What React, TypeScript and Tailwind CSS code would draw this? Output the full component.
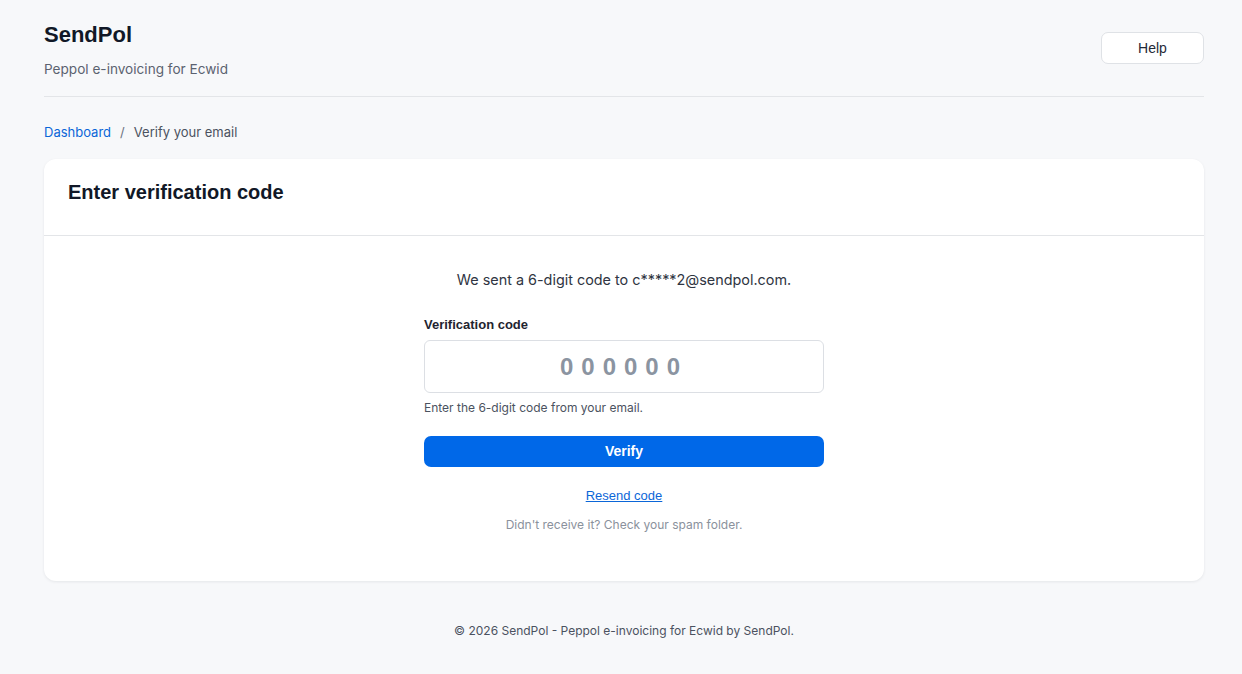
import React from 'react';

const sans = "font-['Liberation_Sans',Arial,sans-serif]";
const inter = "font-['Inter','Noto_Sans',sans-serif]";

export default function App() {
  return (
    <div className={`min-h-screen bg-[#f7f8fa] ${inter}`}>
      <div className="ml-[44px] w-[1160px]">
        <header className="flex items-center justify-between border-b border-[#e3e5e8] pt-[21px] pb-[17px]">
          <div>
            <h1 className={`${sans} text-[22px] leading-[28px] font-bold text-[#111827]`}>SendPol</h1>
            <p className="mt-[10px] text-[13.6px] leading-[20px] text-[#5b6270]">Peppol e-invoicing for Ecwid</p>
          </div>
          <button className={`${sans} mb-[4px] h-[32px] w-[103px] rounded-[7px] border border-[#dfe2e6] bg-white text-[14px] text-[#1f2937]`}>
            Help
          </button>
        </header>

        <nav className="mt-[26px] flex items-center gap-[9px] text-[13px] leading-[18px]">
          <a href="#" className="text-[#0b66d8]">Dashboard</a>
          <span className="text-[#6b7280]">/</span>
          <span className="text-[#4b5260]">Verify your email</span>
        </nav>

        <div className="mt-[18px] rounded-[12px] bg-white shadow-[0_1px_3px_rgba(16,24,40,0.08)]">
          <div className="h-[77px] border-b border-[#e3e5e8] px-6 pt-[19px]">
            <h2 className={`${sans} text-[20px] leading-[28px] font-bold text-[#111827]`}>Enter verification code</h2>
          </div>
          <div className="flex flex-col items-center pt-[33px] pb-[48px]">
            <p className="text-[14.4px] leading-[22px] text-[#2f3542]">We sent a 6-digit code to c*****2@sendpol.com.</p>
            <div className="mt-[25px] w-[400px]">
              <label className={`${sans} block text-[13px] leading-[18px] font-bold text-[#1f2430]`}>Verification code</label>
              <div className="mt-[6px] flex h-[53px] items-center justify-center rounded-[6px] border border-[#dcdfe4] bg-white">
                <span className={`${sans} text-[24px] font-bold tracking-[8px] text-[#8b94a1]`}>000000</span>
              </div>
              <p className="mt-[7px] text-[12px] leading-[16px] text-[#4b5260]">Enter the 6-digit code from your email.</p>
              <button className={`${sans} mt-[20px] h-[31px] w-full rounded-[7px] bg-[#0068e8] text-[14px] font-bold text-white`}>
                Verify
              </button>
              <div className="mt-[18px] text-center leading-[18px]">
                <a href="#" className={`${sans} text-[13px] leading-[18px] text-[#0b66d8] underline`}>Resend code</a>
              </div>
              <p className="mt-[12px] text-center text-[12px] leading-[16px] text-[#8a919c]">
                Didn't receive it? Check your spam folder.
              </p>
            </div>
          </div>
        </div>

        <footer className="mt-[42px] pb-[36px] text-center text-[12px] leading-[16px] text-[#4b5260]">
          © 2026 SendPol - Peppol e-invoicing for Ecwid by SendPol.
        </footer>
      </div>
    </div>
  );
}
